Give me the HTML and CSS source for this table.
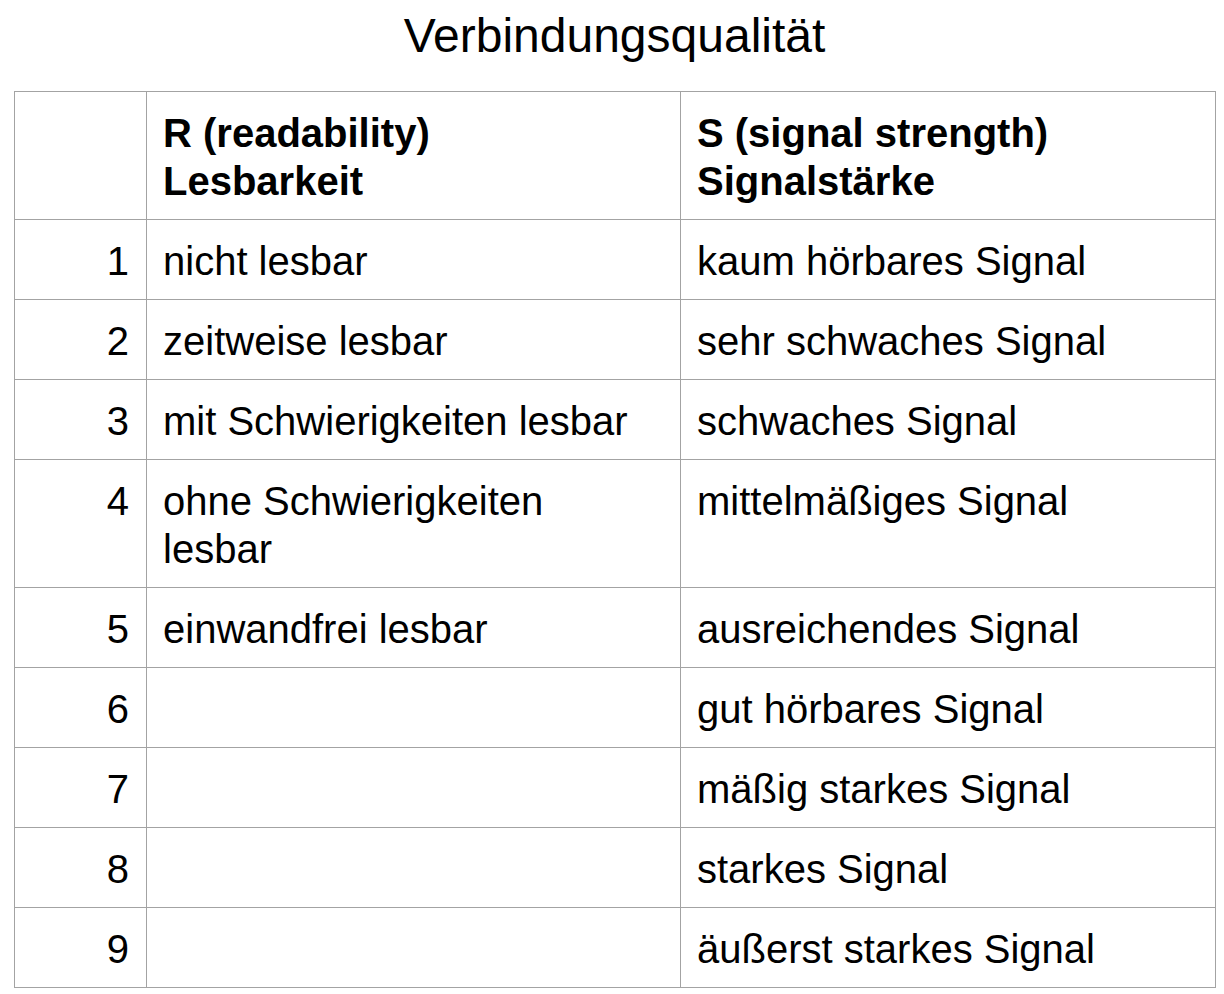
FILE: index.html
```html
<!DOCTYPE html>
<html lang="de">
<head>
<meta charset="utf-8">
<title>Verbindungsqualität</title>
<link rel="stylesheet" href="styles.css">
</head>
<body>
<div class="page">
  <h1 class="title">Verbindungsqualität</h1>
  <table class="rs-table">
    <colgroup>
      <col class="col-num">
      <col class="col-r">
      <col class="col-s">
    </colgroup>
    <thead>
      <tr>
        <th class="num"></th>
        <th>R (readability)<br>Lesbarkeit</th>
        <th>S (signal strength)<br>Signalstärke</th>
      </tr>
    </thead>
    <tbody>
      <tr><td class="num">1</td><td>nicht lesbar</td><td>kaum hörbares Signal</td></tr>
      <tr><td class="num">2</td><td>zeitweise lesbar</td><td>sehr schwaches Signal</td></tr>
      <tr><td class="num">3</td><td>mit Schwierigkeiten lesbar</td><td>schwaches Signal</td></tr>
      <tr><td class="num">4</td><td>ohne Schwierigkeiten<br>lesbar</td><td>mittelmäßiges Signal</td></tr>
      <tr><td class="num">5</td><td>einwandfrei lesbar</td><td>ausreichendes Signal</td></tr>
      <tr><td class="num">6</td><td></td><td>gut hörbares Signal</td></tr>
      <tr><td class="num">7</td><td></td><td>mäßig starkes Signal</td></tr>
      <tr><td class="num">8</td><td></td><td>starkes Signal</td></tr>
      <tr><td class="num">9</td><td></td><td>äußerst starkes Signal</td></tr>
    </tbody>
  </table>
</div>
</body>
</html>
```

FILE: styles.css
```css
html, body {
  margin: 0;
  padding: 0;
  background: #ffffff;
}

body {
  font-family: "Liberation Sans", Arial, Helvetica, sans-serif;
  color: #000000;
}

.page {
  padding: 8px 14px 0 14px;
}

.title {
  margin: 0 0 27px 0;
  font-size: 48px;
  font-weight: normal;
  line-height: 56px;
  text-align: center;
  width: 1201px;
}

.rs-table {
  border-collapse: collapse;
  table-layout: fixed;
  width: 1201px;
  font-size: 40px;
  line-height: 48px;
}

.col-num { width: 132px; }
.col-r { width: 534px; }
.col-s { width: 535px; }

.rs-table th,
.rs-table td {
  border: 1px solid #a3a3a3;
  padding: 17px 16px 14px 16px;
  text-align: left;
  vertical-align: top;
}

.rs-table th {
  font-weight: bold;
}

.rs-table .num {
  text-align: right;
  padding-right: 17px;
}
```
